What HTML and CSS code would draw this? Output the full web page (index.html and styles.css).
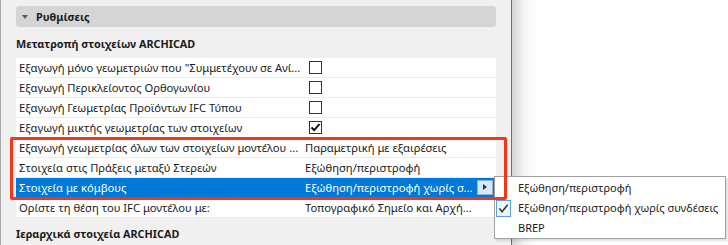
FILE: index.html
```html
<!DOCTYPE html>
<html lang="el">
<head>
    <meta charset="UTF-8">
    <title>Ρυθμίσεις</title>
    <link rel="stylesheet" href="styles.css">
</head>
<body>
    <div class="app">
        <div class="panel">
            <div class="group-head"><span class="caret"></span>Ρυθμίσεις</div>

            <div class="section-title">Μετατροπή στοιχείων ARCHICAD</div>
            <div class="grid">
                <div class="row">
                    <div class="label">Εξαγωγή μόνο γεωμετριών που "Συμμετέχουν σε Ανί...</div>
                    <div class="value"><span class="check"></span></div>
                </div>
                <div class="row">
                    <div class="label">Εξαγωγή Περικλείοντος Ορθογωνίου</div>
                    <div class="value"><span class="check"></span></div>
                </div>
                <div class="row">
                    <div class="label">Εξαγωγή Γεωμετρίας Προϊόντων IFC Τύπου</div>
                    <div class="value"><span class="check"></span></div>
                </div>
                <div class="row">
                    <div class="label">Εξαγωγή μικτής γεωμετρίας των στοιχείων</div>
                    <div class="value">
                        <span class="check">
                            <svg width="11" height="11" viewBox="0 0 11 11"><path d="M1.5 5.5 L4.2 8.2 L9.5 2" fill="none" stroke="#000" stroke-width="1.8"/></svg>
                        </span>
                    </div>
                </div>
                <div class="row">
                    <div class="label">Εξαγωγή γεωμετρίας όλων των στοιχείων μοντέλου ...</div>
                    <div class="value"><span class="text">Παραμετρική με εξαιρέσεις</span></div>
                </div>
                <div class="row">
                    <div class="label">Στοιχεία στις Πράξεις μεταξύ Στερεών</div>
                    <div class="value"><span class="text">Εξώθηση/περιστροφή</span></div>
                </div>
                <div class="row selected">
                    <div class="label">Στοιχεία με κόμβους</div>
                    <div class="value"><span class="text">Εξώθηση/περιστροφή χωρίς σ...</span><span class="more"></span></div>
                </div>
                <div class="row">
                    <div class="label">Ορίστε τη θέση του IFC μοντέλου με:</div>
                    <div class="value"><span class="text">Τοπογραφικό Σημείο και Αρχή...</span></div>
                </div>

                <div class="highlight"></div>
            </div>

            <div class="section-title lower">Ιεραρχικά στοιχεία ARCHICAD</div>
        </div>

        <div class="side"></div>

        <div class="menu">
            <div class="menu-item">Εξώθηση/περιστροφή</div>
            <div class="menu-item checked">
                <span class="tick">
                    <svg width="14" height="15" viewBox="0 0 14 15"><path d="M2.5 7.5 L5.5 11 L11.5 3.5" fill="none" stroke="#3a3a3a" stroke-width="1.8"/></svg>
                </span>
                Εξώθηση/περιστροφή χωρίς συνδέσεις
            </div>
            <div class="menu-item">BREP</div>
        </div>
    </div>
</body>
</html>
```

FILE: styles.css
```css
body {
    margin: 0;
    background-color: white;
    font-family: 'Noto Sans', 'DejaVu Sans', sans-serif;
    font-size: 11.2px;
    color: #1a1a1a;
}

.app {
    position: relative;
    display: flex;
    height: 245px;
    overflow: hidden;
}

.panel {
    box-sizing: border-box;
    width: 512px;
    padding: 6px 15px 0 15px;
    background-color: #f0f0f0;
    border-left: 1px solid #a9a9a9;
    border-right: 1px solid #6e6e6e;
}

.side {
    flex: 1;
    background: linear-gradient(to right, #d4d4d4, #f4f4f4 12px, white 26px);
}

/* collapsible group header */
.group-head {
    display: flex;
    align-items: center;
    height: 21px;
    background-color: #d5d5d5;
    border-radius: 3px;
    font-size: 10.8px;
    font-weight: bold;
}

.caret {
    width: 0;
    height: 0;
    margin: 1px 8px 0 6px;
    border-left: 3.5px solid transparent;
    border-right: 3.5px solid transparent;
    border-top: 4px solid #5a5a5a;
}

.section-title {
    margin: 9px 0 6px 0;
    line-height: 16px;
    font-size: 10.8px;
    font-weight: bold;
}

.section-title.lower {
    margin-top: 8px;
}

/* property grid */
.grid {
    position: relative;
}

.row {
    display: flex;
    height: 19px;
    line-height: 19px;
    background-color: white;
    border-bottom: 1px solid #ececec;
}

.label {
    box-sizing: border-box;
    width: 289px;
    padding: 0 3px;
    white-space: nowrap;
    overflow: hidden;
}

.value {
    flex: 1;
    display: flex;
    align-items: center;
    min-width: 0;
    white-space: nowrap;
}

.value .text {
    flex: 1;
    min-width: 0;
    overflow: hidden;
}

.check {
    box-sizing: border-box;
    display: flex;
    align-items: center;
    justify-content: center;
    width: 13px;
    height: 13px;
    margin-left: 4px;
    border: 1px solid #333;
    background-color: white;
}

.row.selected {
    background-color: #0078d7;
    color: white;
}

.more {
    position: relative;
    flex: none;
    box-sizing: border-box;
    width: 16px;
    height: 15px;
    margin: 0 3px 0 4px;
    background-color: #d9e8f6;
    border: 1px solid #8fb4dc;
}

.more::after {
    content: '';
    position: absolute;
    left: 5px;
    top: 3px;
    border-top: 3.5px solid transparent;
    border-bottom: 3.5px solid transparent;
    border-left: 4px solid #333;
}

/* red annotation frame */
.highlight {
    position: absolute;
    left: -6px;
    top: 79px;
    width: 497px;
    height: 63px;
    box-sizing: border-box;
    border: 3px solid #f2361c;
    border-radius: 2px;
    z-index: 3;
}

/* popup menu */
.menu {
    position: absolute;
    left: 494px;
    top: 176px;
    box-sizing: border-box;
    width: 232px;
    height: 63px;
    padding-top: 1px;
    background-color: white;
    border: 1px solid #a0a0a0;
    box-shadow: 2px 2px 2px rgba(0, 0, 0, 0.12);
    font-size: 11px;
    z-index: 2;
}

.menu-item {
    position: relative;
    height: 20px;
    line-height: 20px;
    padding-left: 23px;
    white-space: nowrap;
}

.tick {
    position: absolute;
    left: 1px;
    top: 2px;
    box-sizing: border-box;
    display: flex;
    align-items: center;
    justify-content: center;
    width: 15px;
    height: 17px;
    border: 1px solid #5b9fe0;
    background-color: #eef5fd;
}
```
